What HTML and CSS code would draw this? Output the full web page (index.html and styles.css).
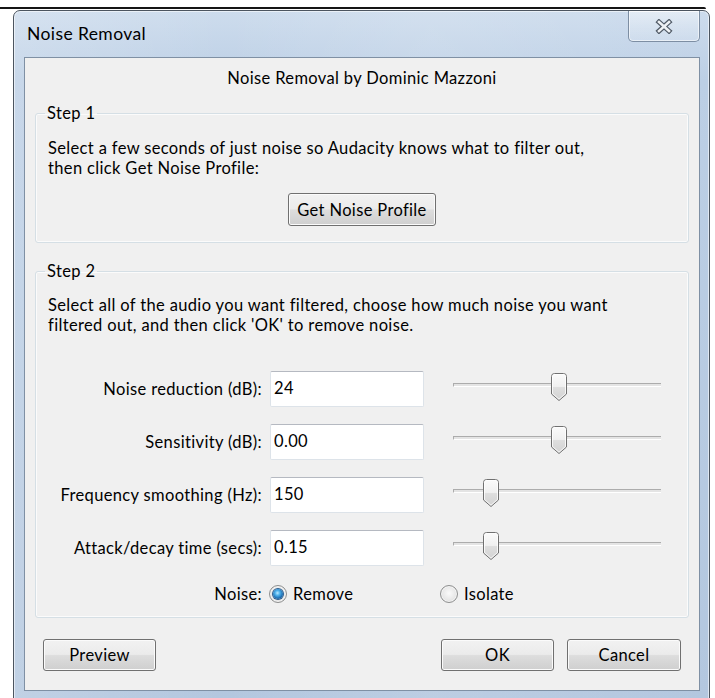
FILE: index.html
```html
<!DOCTYPE html>
<html lang="en">
<head>
<meta charset="utf-8">
<title>Noise Removal</title>
<link rel="stylesheet" href="styles.css">
</head>
<body>
<div class="desk">
  <div class="backline"></div>
  <div class="window">
    <div class="titlebar">
      <span class="title">Noise Removal</span>
      <button class="close" type="button" aria-label="Close">
        <svg width="18" height="15" viewBox="0 0 18 15">
          <g stroke-linecap="square">
            <path d="M4 3 L14 12 M14 3 L4 12" stroke="#505a66" stroke-width="5"/>
            <path d="M4 3 L14 12 M14 3 L4 12" stroke="#eef1f4" stroke-width="2.6"/>
          </g>
        </svg>
      </button>
    </div>
    <div class="client">
      <p class="credit">Noise Removal by Dominic Mazzoni</p>

      <fieldset class="group group-one">
        <legend>Step 1</legend>
        <p class="hint">Select a few seconds of just noise so Audacity knows what to filter out,<br>then click Get Noise Profile:</p>
        <div class="center-row">
          <button class="btn btn-profile" type="button">Get Noise Profile</button>
        </div>
      </fieldset>

      <fieldset class="group group-two">
        <legend>Step 2</legend>
        <p class="hint">Select all of the audio you want filtered, choose how much noise you want<br>filtered out, and then click 'OK' to remove noise.</p>

        <div class="params">
          <label class="param-label" for="nr">Noise reduction (dB):</label>
          <input class="field" id="nr" type="text" value="24">
          <div class="slider-cell"><div class="track"><span class="thumb" style="left:97px"></span></div></div>

          <label class="param-label" for="sens">Sensitivity (dB):</label>
          <input class="field" id="sens" type="text" value="0.00">
          <div class="slider-cell"><div class="track"><span class="thumb" style="left:97px"></span></div></div>

          <label class="param-label" for="freq">Frequency smoothing (Hz):</label>
          <input class="field" id="freq" type="text" value="150">
          <div class="slider-cell"><div class="track"><span class="thumb" style="left:29px"></span></div></div>

          <label class="param-label" for="att">Attack/decay time (secs):</label>
          <input class="field" id="att" type="text" value="0.15">
          <div class="slider-cell"><div class="track"><span class="thumb" style="left:29px"></span></div></div>

          <span class="param-label noise-label">Noise:</span>
          <div class="radios">
            <label class="option option-first"><span class="radio checked"></span>Remove</label>
            <label class="option"><span class="radio"></span>Isolate</label>
          </div>
        </div>
      </fieldset>

      <div class="actions">
        <button class="btn btn-action" type="button">Preview</button>
        <span class="spacer"></span>
        <button class="btn btn-action" type="button">OK</button>
        <button class="btn btn-action btn-cancel" type="button">Cancel</button>
      </div>
    </div>
  </div>
</div>
</body>
</html>
```
FILE: styles.css
```css
html, body {
  margin: 0;
  padding: 0;
  background: #ffffff;
}

body {
  width: 715px;
  height: 698px;
  overflow: hidden;
  font-family: Lato, "Noto Sans", sans-serif;
  font-size: 16.5px;
  letter-spacing: 0.35px;
  line-height: 20px;
  color: #000;
}

.desk {
  display: flex;
  flex-direction: column;
}

/* edge of the window lying behind the dialog */
.backline {
  width: 706px;
  height: 2px;
  margin-top: 7px;
  background: #151515;
  border-top-right-radius: 3px;
}

.window {
  box-sizing: border-box;
  width: 697px;
  height: 692px;
  margin: 1px 0 0 13px;
  padding: 0 9px 10px 10px;
  border: 1px solid #4c5560;
  border-radius: 7px 7px 0 0;
  background: linear-gradient(90deg, rgba(255,255,255,0.18), rgba(255,255,255,0) 30%, rgba(255,255,255,0.12) 60%, rgba(255,255,255,0) 100%),
              linear-gradient(180deg, #cddced 0%, #bccfe5 10%, #b3c7df 100%);
  box-shadow: inset 0 0 0 1px rgba(255,255,255,0.55);
  display: flex;
  flex-direction: column;
}

.titlebar {
  height: 46px;
  display: flex;
  align-items: flex-start;
  flex-shrink: 0;
}

.title {
  padding: 13px 0 0 3px;
  font-size: 17.5px;
  letter-spacing: 0.4px;
  line-height: 20px;
  color: #000;
}

.close {
  margin-left: auto;
  width: 72px;
  height: 31px;
  padding: 0;
  border: 1px solid #7d8ea3;
  border-top: none;
  border-radius: 0 0 5px 5px;
  background: linear-gradient(180deg, rgba(255,255,255,0.45) 0%, rgba(255,255,255,0.25) 50%, rgba(255,255,255,0.12) 100%);
  box-shadow: inset 0 0 0 1px rgba(255,255,255,0.55);
  display: flex;
  align-items: center;
  justify-content: center;
}

.close svg {
  display: block;
  margin-top: 1px;
}

.client {
  flex: 1;
  display: flex;
  flex-direction: column;
  border: 1px solid #7f90a4;
  background: #f0f0f0;
  padding: 10px 0 17px;
}

.credit {
  margin: 0;
  text-align: center;
}

.group {
  margin: 0 10px;
  padding: 0 12px;
  border: 1px solid #d5dfe5;
  border-radius: 3px;
  box-shadow: inset 0 0 0 1px rgba(255,255,255,0.7);
  min-inline-size: 0;
}

.group legend {
  padding: 0 2px;
  margin-left: -3px;
  line-height: 20px;
}

.group-one {
  margin-top: 15px;
  padding-top: 15px;
  padding-bottom: 16px;
}

.group-two {
  margin-top: 18px;
  padding-top: 14px;
  padding-bottom: 12px;
}

.hint {
  margin: 0;
  white-space: nowrap;
}

.center-row {
  display: flex;
  justify-content: center;
  margin-top: 15px;
}

.btn {
  box-sizing: border-box;
  font-family: inherit;
  font-size: 16.5px;
  letter-spacing: inherit;
  color: #000;
  padding: 0;
  border: 1px solid #707070;
  border-radius: 3px;
  background: linear-gradient(180deg, #f2f2f2 0%, #ebebeb 48%, #dddddd 52%, #cfcfcf 100%);
  box-shadow: inset 0 0 0 1px #fbfbfb;
}

.btn-profile {
  width: 148px;
  height: 33px;
}

.params {
  margin-top: 36px;
  display: grid;
  grid-template-columns: 214px 154px 1fr;
  grid-template-rows: 36px 36px 36px 36px 22px;
  column-gap: 8px;
  row-gap: 17px;
  align-items: center;
}

.param-label {
  text-align: right;
  white-space: nowrap;
}

.field {
  box-sizing: border-box;
  width: 154px;
  height: 36px;
  margin: 0;
  padding: 0 4px 3px 3px;
  border: 1px solid #dde3e9;
  border-top-color: #b5b9c1;
  border-radius: 2px;
  background: #fff;
  font-family: inherit;
  font-size: 16.5px;
  letter-spacing: inherit;
  color: #000;
  outline: none;
}

.slider-cell {
  height: 36px;
  padding-left: 21px;
}

.track {
  position: relative;
  box-sizing: border-box;
  width: 208px;
  height: 4px;
  margin-top: 12px;
  border-top: 1px solid #acacac;
  border-left: 1px solid #acacac;
  border-bottom: 1px solid #ffffff;
  background: #e4e4e4;
}

.thumb {
  position: absolute;
  top: -11px;
  width: 16px;
  height: 28px;
  background: url("data:image/svg+xml,%3Csvg xmlns='http://www.w3.org/2000/svg' width='16' height='28' viewBox='0 0 16 28'%3E%3Cdefs%3E%3ClinearGradient id='g' x1='0' y1='0' x2='0' y2='1'%3E%3Cstop offset='0' stop-color='%23fbfbfb'/%3E%3Cstop offset='0.48' stop-color='%23f0f0f0'/%3E%3Cstop offset='0.52' stop-color='%23dedede'/%3E%3Cstop offset='1' stop-color='%23d2d2d2'/%3E%3C/linearGradient%3E%3C/defs%3E%3Cpath d='M0.5 3.5 Q0.5 0.5 3.5 0.5 H12.5 Q15.5 0.5 15.5 3.5 V21 L8 27.5 L0.5 21 Z' fill='url(%23g)' stroke='%23707070'/%3E%3Cpath d='M1.5 3.5 Q1.5 1.5 3.5 1.5 H12.5 Q14.5 1.5 14.5 3.5 V20.5 L8 26.2 L1.5 20.5 Z' fill='none' stroke='%23ffffff' stroke-opacity='0.8'/%3E%3C/svg%3E") no-repeat;
}

.noise-label,
.radios {
  height: 22px;
  line-height: 22px;
}

.radios {
  grid-column: 2 / span 2;
  display: flex;
  align-items: center;
}

.option {
  display: flex;
  align-items: center;
  gap: 6px;
}

.option-first {
  width: 171px;
  margin-left: -1px;
}

.radio {
  box-sizing: border-box;
  width: 18px;
  height: 18px;
  border-radius: 50%;
  border: 1px solid #8e8f8f;
  background: radial-gradient(circle at 50% 45%, #fafafa 0%, #e8e8e8 55%, #cfcfcf 100%);
  box-shadow: inset 0 0 0 1px #f4f4f4;
  display: flex;
  align-items: center;
  justify-content: center;
}

.radio.checked::after {
  content: "";
  width: 10px;
  height: 10px;
  border-radius: 50%;
  background: radial-gradient(circle at 45% 40%, #b9e8ff 0%, #4fb1ea 30%, #1a6bb0 65%, #0c3768 100%);
  box-shadow: 0 0 0 1px #2a5d8f;
}

.actions {
  display: flex;
  margin: 21px 18px 0;
  gap: 13px;
}

.spacer {
  flex: 1;
}

.btn-action {
  width: 113px;
  height: 32px;
}

.btn-cancel {
  width: 114px;
}
```
